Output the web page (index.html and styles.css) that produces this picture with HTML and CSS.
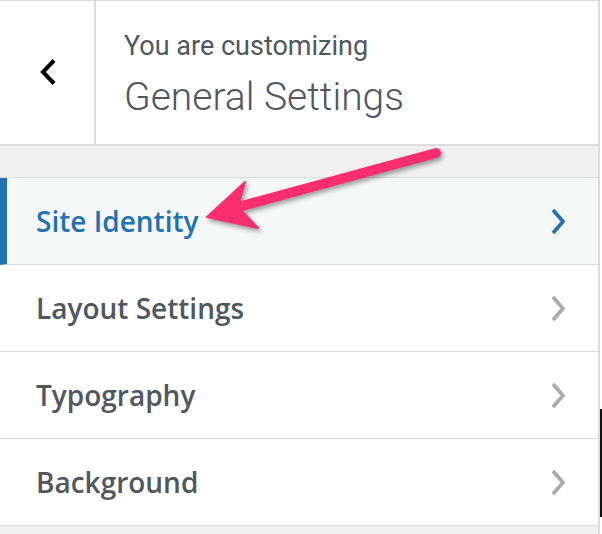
FILE: index.html
```html
<!DOCTYPE html>
<html>
<head>
<link rel="stylesheet" href="styles.css">
</head>
<body>
<div class='page'>
  <div class='panel'>
    <div class='panel-header'>
      <button class='back-btn' aria-label='Back'>
        <svg class='back-icon' viewBox='0 0 18 28'>
          <path d='M15 2.5L4 14L15 25.5' fill='none' stroke='#000' stroke-width='4'/>
        </svg>
      </button>
      <div class='panel-title'>
        <span class='info'>You are customizing</span>
        <h3 class='title'>General Settings</h3>
      </div>
    </div>
    <div class='band'></div>
    <ul class='sections'>
      <li class='section active'>
        <span class='section-name'>Site Identity</span>
        <svg class='chev' viewBox='0 0 16 27'><path d='M3 2L13 13.5L3 25' fill='none' stroke-width='3.6'/></svg>
      </li>
      <li class='section'>
        <span class='section-name'>Layout Settings</span>
        <svg class='chev' viewBox='0 0 16 27'><path d='M3 2L13 13.5L3 25' fill='none' stroke-width='3.6'/></svg>
      </li>
      <li class='section'>
        <span class='section-name'>Typography</span>
        <svg class='chev' viewBox='0 0 16 27'><path d='M3 2L13 13.5L3 25' fill='none' stroke-width='3.6'/></svg>
      </li>
      <li class='section'>
        <span class='section-name'>Background</span>
        <svg class='chev' viewBox='0 0 16 27'><path d='M3 2L13 13.5L3 25' fill='none' stroke-width='3.6'/></svg>
      </li>
    </ul>
  </div>
  <div class='edge'><div class='edge-bar'></div></div>
  <!-- annotation arrow drawn over the panel -->
  <svg class='pointer' viewBox='0 0 602 534'>
    <g class='pointer-shape'>
      <path d='M238 207L436 153' stroke='#fb2f6d' stroke-width='10' stroke-linecap='round'/>
      <path d='M207 217L245 182L238 207L258 228Z' fill='#fb2f6d' stroke='#fb2f6d' stroke-width='2' stroke-linejoin='round'/>
    </g>
  </svg>
</div>
</body>
</html>
```

FILE: styles.css
```css
body { margin: 0; background: #fff; }
.page { position: relative; display: flex; width: 602px; height: 534px; overflow: hidden; }
.panel { width: 600px; flex: none; box-sizing: border-box; border-top: 1px solid #dcdcde; border-right: 2px solid #dcdcde; background: #f0f0f1; }
.panel-header { display: flex; height: 143px; background: #fff; border-bottom: 2px solid #dcdcde; }
.back-btn { width: 96px; flex: none; padding: 0 0 0 2px; border: none; border-right: 2px solid #dcdcde; background: #fff; display: flex; align-items: center; justify-content: center; }
.back-icon { width: 18px; height: 28px; margin-bottom: 2px; }
.panel-title { padding: 29px 0 0 28px; font-family: Roboto, sans-serif; color: #50575e; }
.info { display: block; font-size: 27px; line-height: 32px; }
.title { margin: 11px 0 0; font-size: 39px; font-weight: 300; line-height: 48px; }
.band { height: 31px; border-bottom: 1px solid #dcdcde; }
.sections { list-style: none; margin: 0; padding: 0; }
.section { display: flex; align-items: center; justify-content: space-between; height: 86px; padding: 0 32px 0 36px; background: #fff; border-bottom: 1px solid #dcdcde; font-family: "Open Sans", sans-serif; font-weight: 600; font-size: 28px; color: #50575e; }
.section.active { padding-left: 29px; border-left: 7px solid #2271b1; background: #f6f7f7; color: #2271b1; }
.chev { width: 16px; height: 27px; stroke: #a7aaad; }
.active .chev { stroke: #2271b1; }
.edge { width: 2px; flex: none; }
.edge-bar { margin-top: 409px; height: 108px; background: #111; }
.pointer { position: absolute; left: 0; top: 0; width: 602px; height: 534px; pointer-events: none; }
.pointer-shape { filter: drop-shadow(2px 3px 2px rgba(0, 0, 0, 0.35)); }
```
